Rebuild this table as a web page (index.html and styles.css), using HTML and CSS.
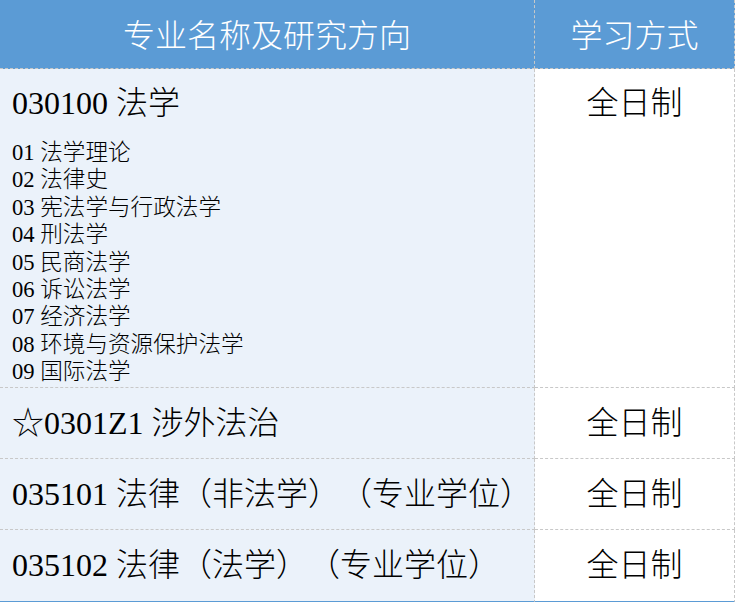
FILE: index.html
```html
<!DOCTYPE html>
<html lang="zh-CN">
<head>
<meta charset="utf-8">
<title>专业名称及研究方向</title>
<link rel="stylesheet" href="styles.css">
</head>
<body>
<div class="table">
  <div class="cell head name">专业名称及研究方向</div>
  <div class="cell head mode">学习方式</div>

  <div class="cell name first">
    <div class="title">030100 法学</div>
    <ul class="dirs">
      <li>01 法学理论</li>
      <li>02 法律史</li>
      <li>03 宪法学与行政法学</li>
      <li>04 刑法学</li>
      <li>05 民商法学</li>
      <li>06 诉讼法学</li>
      <li>07 经济法学</li>
      <li>08 环境与资源保护法学</li>
      <li>09 国际法学</li>
    </ul>
  </div>
  <div class="cell mode first"><div class="title">全日制</div></div>

  <div class="cell name row"><div class="title">☆0301Z1 涉外法治</div></div>
  <div class="cell mode row"><div class="title">全日制</div></div>

  <div class="cell name row"><div class="title">035101 法律（非法学）（专业学位）</div></div>
  <div class="cell mode row"><div class="title">全日制</div></div>

  <div class="cell name row last"><div class="title">035102 法律（法学）（专业学位）</div></div>
  <div class="cell mode row last"><div class="title">全日制</div></div>
</div>
</body>
</html>
```

FILE: styles.css
```css
html, body {
  margin: 0;
  padding: 0;
  background: #ffffff;
}

body {
  width: 736px;
  height: 602px;
  overflow: hidden;
  font-family: "Liberation Serif", "Noto Sans CJK SC", serif;
  color: #000000;
  text-spacing-trim: space-all;
}

.table {
  display: grid;
  grid-template-columns: 535px 201px;
}

.cell {
  box-sizing: border-box;
  border-bottom: 1px dashed #c8c8c8;
}

.name {
  background: #ebf2fa;
  border-right: 1px dashed #c8c8c8;
  padding-left: 12px;
}

.mode {
  background: #ffffff;
  border-right: 1px dashed #c8c8c8;
  text-align: center;
  margin-right: 1px;
}

.head {
  height: 69px;
  background: #5b9bd5;
  color: #ffffff;
  font-size: 32px;
  font-weight: 300;
  display: flex;
  align-items: center;
  justify-content: center;
  padding: 0 0 2px 0;
}

.title {
  font-size: 32px;
  font-weight: 300;
  line-height: 36px;
}

.first {
  height: 319px;
  padding-top: 16px;
}

.dirs {
  list-style: none;
  margin: 18px 0 0 0;
  padding: 0;
  font-size: 22.6px;
  font-weight: 300;
  line-height: 27.4px;
}

.row {
  height: 71px;
  display: flex;
  align-items: center;
}

.mode.row {
  justify-content: center;
}

.last {
  height: 73px;
  border-bottom: 2px solid #5b9bd5;
  padding-bottom: 1px;
}
```
